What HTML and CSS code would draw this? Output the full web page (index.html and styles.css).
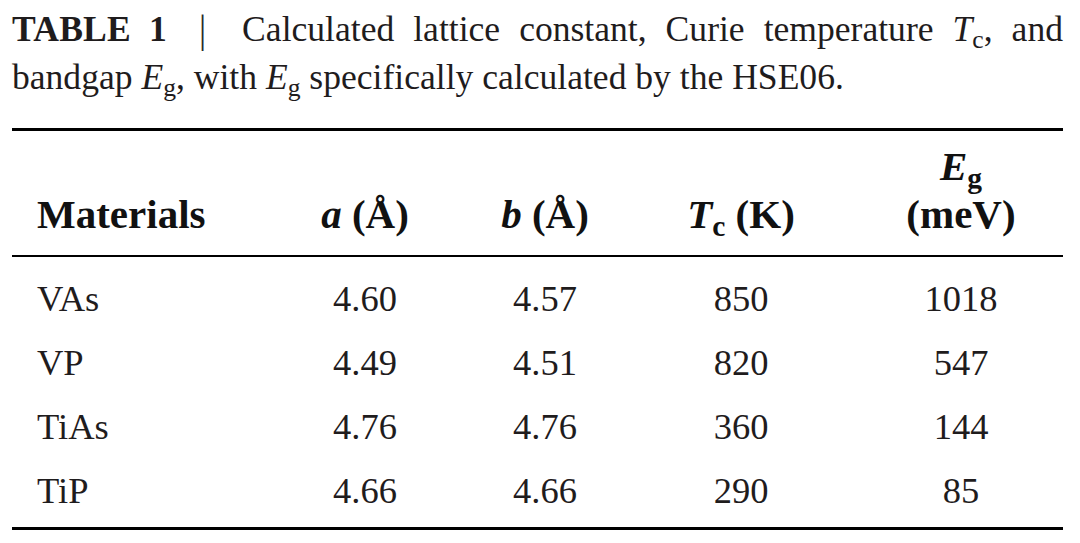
FILE: index.html
```html
<!DOCTYPE html>
<html lang="en">
<head>
<meta charset="utf-8">
<title>Table 1</title>
<link rel="stylesheet" href="styles.css">
</head>
<body>
<div class="page">
  <p class="caption"><b class="label">TABLE</b><b class="label num">1</b><span class="bar">|</span>Calculated lattice constant, Curie temperature <i>T</i><span class="sub">c</span>, and bandgap <i>E</i><span class="sub">g</span>, with <i>E</i><span class="sub">g</span> specifically calculated by the HSE06.</p>
  <table class="data">
    <colgroup>
      <col class="c-mat">
      <col class="c-a">
      <col class="c-b">
      <col class="c-tc">
      <col class="c-eg">
    </colgroup>
    <thead>
      <tr>
        <th class="mat">Materials</th>
        <th><i>a</i> (Å)</th>
        <th><i>b</i> (Å)</th>
        <th><i>T</i><span class="sub">c</span> (K)</th>
        <th class="eg"><i>E</i><span class="sub">g</span><br>(meV)</th>
      </tr>
    </thead>
    <tbody>
      <tr class="first"><td class="mat">VAs</td><td>4.60</td><td>4.57</td><td>850</td><td class="eg">1018</td></tr>
      <tr><td class="mat">VP</td><td>4.49</td><td>4.51</td><td>820</td><td class="eg">547</td></tr>
      <tr><td class="mat">TiAs</td><td>4.76</td><td>4.76</td><td>360</td><td class="eg">144</td></tr>
      <tr class="last"><td class="mat">TiP</td><td>4.66</td><td>4.66</td><td>290</td><td class="eg">85</td></tr>
    </tbody>
  </table>
</div>
</body>
</html>
```

FILE: styles.css
```css
html, body {
  margin: 0;
  padding: 0;
  background: #ffffff;
}

.page {
  width: 1051px;
  padding: 0 17px 0 12px;
  font-family: "Liberation Serif", "Times New Roman", serif;
  color: #1f1c1d;
}

.caption {
  margin: 0;
  padding-top: 5px;
  font-size: 35.6px;
  line-height: 48px;
  text-align: justify;
}

.caption .label {
  font-weight: bold;
  letter-spacing: 0.2px;
}

.caption .num {
  margin-left: 18px;
}

.caption .bar {
  display: inline-block;
  line-height: 1;
  margin: 0 36px 0 32px;
  color: #2a2a2a;
  transform: scaleY(1.1);
}

.sub {
  font-size: 0.72em;
  line-height: 0;
  position: relative;
  top: 0.28em;
}

.data {
  margin-top: 27px;
  width: 1051px;
  table-layout: fixed;
  border-collapse: separate;
  border-spacing: 0;
}

.c-mat { width: 263px; }
.c-a { width: 180px; }
.c-b { width: 180px; }
.c-tc { width: 212px; }
.c-eg { width: 216px; }

.data th,
.data td {
  padding: 0;
  text-align: center;
}

.data th {
  font-size: 41px;
  line-height: 48px;
  font-weight: bold;
  vertical-align: bottom;
  padding-top: 11px;
  padding-bottom: 17px;
  border-top: 3px solid #000;
  border-bottom: 2px solid #000;
  color: #111;
}

.data td {
  font-size: 36.5px;
  line-height: 64px;
  font-weight: normal;
}

.data .mat {
  text-align: left;
  padding-left: 25px;
}

.data .eg {
  padding-left: 12px;
}

.data tr.first td {
  padding-top: 10px;
}

.data tr.last td {
  padding-bottom: 4px;
  border-bottom: 3px solid #000;
}
```
